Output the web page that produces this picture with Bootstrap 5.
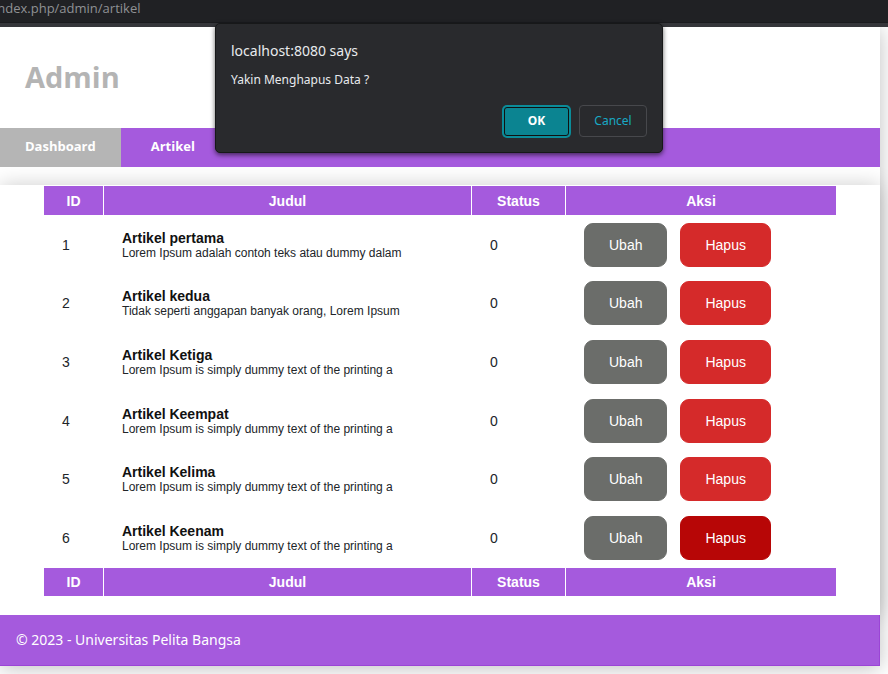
<!DOCTYPE html>
<html lang="id">
<head>
<meta charset="utf-8">
<meta name="viewport" content="width=device-width, initial-scale=1">
<title>Admin</title>
<link href="https://cdn.jsdelivr.net/npm/bootstrap@5.3.0/dist/css/bootstrap.min.css" rel="stylesheet">
<style>
  :root { --violet: #a55add; }
  body { font-family: "Open Sans", "Noto Sans", sans-serif; background: #fff; }
  .browser-bar { background: #202124; height: 27px; border-bottom: 4px solid #35363a; box-shadow: inset 0 -1px #1a1b1e; }
  .address { margin-left: -6px; height: 17px; font-size: 13px; line-height: 17px; color: #8f9194; }
  .site { box-shadow: 0 2px 20px rgba(0, 0, 0, .25); }
  .site-title { font-size: 29px; line-height: 37px; padding: 31px 25px 33px; color: #b4b4b4; }
  .site-nav { background: var(--violet); margin-bottom: 18px; z-index: 2; }
  .site-nav a { font-size: 13px; line-height: 19px; padding: 9px 30px 11px; }
  .site-nav a:first-child { padding-left: 25px; padding-right: 25px; }
  .site-nav a.active { background: #b5b5b5; }
  .panel { box-shadow: 0 0 20px rgba(0, 0, 0, .2); padding: 1px 0 19px; background: #fff; }
  .articles { width: 90%; table-layout: fixed; border-collapse: separate; border-spacing: 0; font: 14px/16px "Liberation Sans", Arial, sans-serif; color: #212529; }
  .articles th { background: var(--violet); background-clip: padding-box; color: #fff; height: 29px; padding: 0; text-align: center; vertical-align: middle; }
  .articles th + th { border-left: 1px solid #fff; }
  .articles tfoot th { border-top: 1px solid #fff; }
  .articles td { height: 59px; padding: 0 18px; vertical-align: middle; }
  .articles tr:nth-child(3n + 2) td { height: 58px; }
  .articles td + td { padding-left: 19px; }
  .col-id { width: 59px; }
  .col-status { width: 94px; }
  .col-action { width: 271px; }
  .article-name { color: #111; line-height: 16px; }
  .article-text { font-size: 12px; line-height: 14px; white-space: nowrap; }
  .act { --bs-btn-font-size: 14px; --bs-btn-line-height: 20px; --bs-btn-padding-x: 24px; --bs-btn-padding-y: 11px; --bs-btn-border-radius: 9px; --bs-btn-color: #fff; --bs-btn-hover-color: #fff; font-family: inherit; }
  .act-edit { --bs-btn-bg: #6b6d6a; --bs-btn-border-color: #6b6d6a; --bs-btn-hover-bg: #555; }
  .act-delete { --bs-btn-bg: #d52a2a; --bs-btn-border-color: #d52a2a; --bs-btn-hover-bg: #b70606; }
  .act-delete.active { --bs-btn-active-bg: #b70606; --bs-btn-active-border-color: #b70606; --bs-btn-active-color: #fff; }
  .actions { gap: 13px; }
  .site-footer { background: var(--violet); color: #fff; font-family: "Noto Sans", "Open Sans", sans-serif; font-size: 14px; line-height: 20px; padding: 15px 16px; border: solid #9b45d6; border-width: 0 1px 1px 0; }
  .prompt { top: 23px; width: 448px; padding: 18px 15px 15px; background: #292a2d; color: #e8eaed; border: 1px solid #171819; border-radius: 5px; box-shadow: 0 2px 5px rgba(0, 0, 0, .6); font-family: "Noto Sans", "Open Sans", sans-serif; }
  .prompt-layer { top: 0; left: 0; right: 10px; z-index: 5; }
  .prompt-title { font-size: 14px; line-height: 18px; }
  .prompt-text { font-size: 12px; line-height: 16px; margin-top: 12px; }
  .prompt-actions { margin-top: 17px; gap: 8px; }
  .prompt-actions .btn { width: 68px; height: 32px; padding: 0; font-size: 12px; line-height: 18px; border-radius: 4px; }
  .btn-accept, .btn-accept:hover { background: #0b8491; color: #fff; border: 1px solid #111; box-shadow: 0 0 0 2px #0b8c99; }
  .prompt-actions .btn-accept { width: 65px; height: 29px; border-radius: 3px; margin-right: 2px; }
  .btn-dismiss, .btn-dismiss:hover { color: #18a9c4; border: 1px solid #47484c; }
</style>
</head>
<body class="pb-2">
<div class="browser-bar overflow-hidden position-relative">
  <input class="address d-block w-100 border-0 bg-transparent p-0" type="text" aria-label="Alamat" value="index.php/admin/artikel">
</div>

<div class="site me-2">
  <header>
    <h1 class="site-title fw-bold mb-0">Admin</h1>
  </header>
  <nav class="site-nav d-flex position-relative">
    <a class="active fw-bold text-white text-decoration-none" href="#">Dashboard</a>
    <a class="fw-bold text-white text-decoration-none" href="#">Artikel</a>
  </nav>
  <main class="panel">
    <table class="articles mx-auto">
      <colgroup><col class="col-id"><col><col class="col-status"><col class="col-action"></colgroup>
      <thead><tr><th>ID</th><th>Judul</th><th>Status</th><th>Aksi</th></tr></thead>
      <tbody>
        <tr><td>1</td><td><div class="article-name fw-bold">Artikel pertama</div><div class="article-text">Lorem Ipsum adalah contoh teks atau dummy dalam</div></td><td>0</td><td><div class="actions d-flex"><button class="btn act act-edit" type="button">Ubah</button><button class="btn act act-delete" type="button">Hapus</button></div></td></tr>
        <tr><td>2</td><td><div class="article-name fw-bold">Artikel kedua</div><div class="article-text">Tidak seperti anggapan banyak orang, Lorem Ipsum</div></td><td>0</td><td><div class="actions d-flex"><button class="btn act act-edit" type="button">Ubah</button><button class="btn act act-delete" type="button">Hapus</button></div></td></tr>
        <tr><td>3</td><td><div class="article-name fw-bold">Artikel Ketiga</div><div class="article-text">Lorem Ipsum is simply dummy text of the printing a</div></td><td>0</td><td><div class="actions d-flex"><button class="btn act act-edit" type="button">Ubah</button><button class="btn act act-delete" type="button">Hapus</button></div></td></tr>
        <tr><td>4</td><td><div class="article-name fw-bold">Artikel Keempat</div><div class="article-text">Lorem Ipsum is simply dummy text of the printing a</div></td><td>0</td><td><div class="actions d-flex"><button class="btn act act-edit" type="button">Ubah</button><button class="btn act act-delete" type="button">Hapus</button></div></td></tr>
        <tr><td>5</td><td><div class="article-name fw-bold">Artikel Kelima</div><div class="article-text">Lorem Ipsum is simply dummy text of the printing a</div></td><td>0</td><td><div class="actions d-flex"><button class="btn act act-edit" type="button">Ubah</button><button class="btn act act-delete" type="button">Hapus</button></div></td></tr>
        <tr><td>6</td><td><div class="article-name fw-bold">Artikel Keenam</div><div class="article-text">Lorem Ipsum is simply dummy text of the printing a</div></td><td>0</td><td><div class="actions d-flex"><button class="btn act act-edit" type="button">Ubah</button><button class="btn act act-delete active" type="button">Hapus</button></div></td></tr>
      </tbody>
      <tfoot><tr><th>ID</th><th>Judul</th><th>Status</th><th>Aksi</th></tr></tfoot>
    </table>
  </main>
  <footer class="site-footer position-relative">© 2023 - Universitas Pelita Bangsa</footer>
</div>

<div class="prompt-layer position-absolute">
  <div class="prompt position-absolute start-50 translate-middle-x" role="alertdialog" aria-labelledby="prompt-title" aria-describedby="prompt-text">
    <div class="prompt-title" id="prompt-title">localhost:8080 says</div>
    <div class="prompt-text" id="prompt-text">Yakin Menghapus Data ?</div>
    <div class="prompt-actions d-flex justify-content-end align-items-center">
      <button class="btn btn-accept fw-bold" type="button">OK</button>
      <button class="btn btn-dismiss" type="button">Cancel</button>
    </div>
  </div>
</div>
<script src="https://cdn.jsdelivr.net/npm/bootstrap@5.3.0/dist/js/bootstrap.bundle.min.js"></script>
</body>
</html>
